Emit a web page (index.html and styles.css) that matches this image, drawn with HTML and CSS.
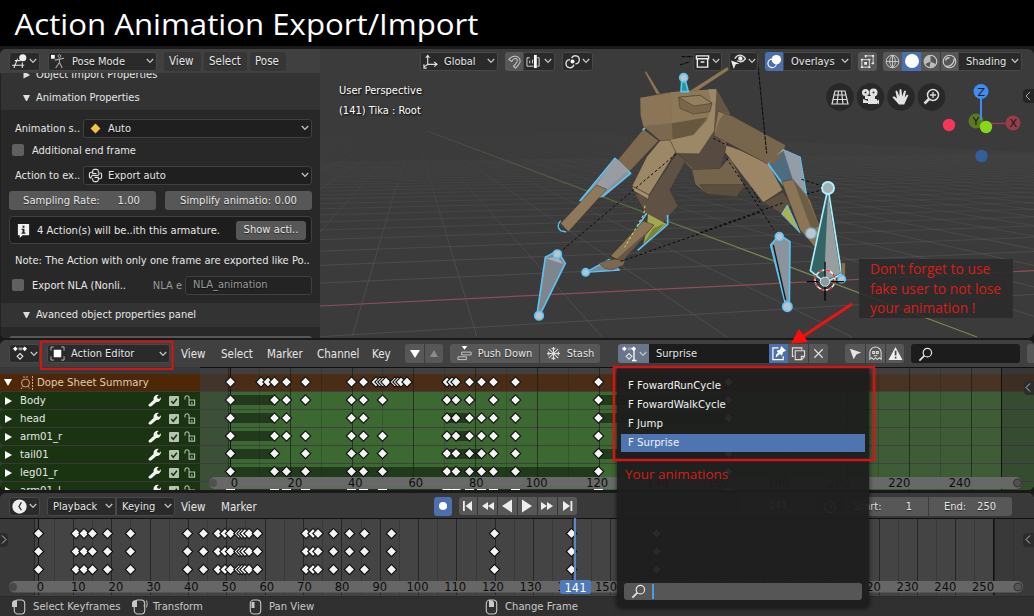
FILE: index.html
```html
<!DOCTYPE html>
<html lang="en">
<head>
<meta charset="utf-8">
<title>Action Animation Export/Import</title>
<link rel="stylesheet" href="styles.css">
</head>
<body>
<svg class="defs" aria-hidden="true">
  <symbol id="chev" viewBox="0 0 8 6"><path d="M.8 1 4 4.4 7.2 1" fill="none" stroke="#c4c4c4" stroke-width="1.3"/></symbol>
  <symbol id="view3d" viewBox="0 0 16 16"><path d="M3 7h6M0 12h13M6 5 2 15M11 9v6" fill="none" stroke="#ddd" stroke-width="1.2"/><circle cx="11.500" cy="4" r="3.8" fill="#eee"/></symbol>
  <symbol id="pose" viewBox="0 0 16 16"><rect x="0" y="1" width="4" height="4" fill="#fff"/><circle cx="9" cy="2.200" r="1.5" fill="none" stroke="#aaa"/><path d="m4 6.500 5-1 5-1M9 5v4l-4 6M9 9l3 6" fill="none" stroke="#aaa" stroke-width="1.2"/></symbol>
  <symbol id="axes" viewBox="0 0 16 16"><path d="M5 12V2M3 4l2-2.500 2 2.500M5 11h10M12 8.500 15 11l-3 2.500M5 11l-4 3M1 11v4h3" fill="none" stroke="#ddd" stroke-width="1.200"/></symbol>
  <symbol id="magnet" viewBox="0 0 16 16"><path d="M2 6c4-6 12-4 12 2 0 2-2 4-5 7l-2-2c3-3 4-4 4-6 0-3-4-3-6 1z" fill="none" stroke="#c5c5c5" stroke-width="1.100"/></symbol>
  <symbol id="snap" viewBox="0 0 16 16"><path d="M1 4v9h7M1 4h3M4 7v3M7 6v4M12 4h2v9h-2" fill="none" stroke="#ddd"/><rect x="8.500" y="1" width="3" height="14" fill="#fff"/></symbol>
  <symbol id="link" viewBox="0 0 16 16"><path d="M9.500 11.500A4.300 4.300 0 1 1 5.500 6M7 4.500A4.300 4.300 0 1 1 11 10.500" fill="none" stroke="#ddd" stroke-width="1.400"/><circle cx="8" cy="8" r="2.100" fill="#fff"/></symbol>
  <symbol id="archive" viewBox="0 0 16 16"><path d="M1.500 2h13v3h-13zM2.500 5v9h11V5M6 8.500h4" fill="none" stroke="#eee" stroke-width="1.500"/></symbol>
  <symbol id="eye" viewBox="0 0 16 16"><path d="M4 5c3-5 8-5 11.500 0-3 4-6 4-9 2" fill="none" stroke="#ddd" stroke-width="1.400"/><circle cx="10" cy="4.800" r="2.300" fill="#eee"/><path d="m0 7 9 3-4 1-2 5z" fill="#eee"/></symbol>
  <symbol id="overlay" viewBox="0 0 16 16"><circle cx="10" cy="6" r="5" fill="#fff"/><circle cx="5.500" cy="10" r="4.500" fill="none" stroke="#fff" stroke-width="1.200"/></symbol>
  <symbol id="xray" viewBox="0 0 16 16"><path d="M2 6h8v8H2zM6 2h8v8h-2M6 2v2" fill="none" stroke="#ddd"/><path d="M1 5h2v2H1zM9 5h2v2H9zM1 13h2v2H1zM9 13h2v2H9zM5 1h2v2H5zM13 1h2v2h-2zM13 9h2v2h-2zM4.500 8.500h3v3h-3z" fill="#eee"/></symbol>
  <symbol id="wire" viewBox="0 0 16 16"><circle cx="8" cy="8" r="6.700" fill="none" stroke="#ccc"/><path d="M1.500 8h13M8 1.500v13M8 1.300c-4 4-4 9 0 13.400M8 1.300c4 4 4 9 0 13.400" fill="none" stroke="#ccc"/></symbol>
  <symbol id="mat" viewBox="0 0 16 16"><circle cx="8" cy="8" r="6.700" fill="none" stroke="#ccc" stroke-width="1.200"/><path d="M8 8V1.500A6.500 6.500 0 0 0 2 11zM8 8l6 3a6.500 6.500 0 0 1-7 3z" fill="#bbb"/></symbol>
  <symbol id="render" viewBox="0 0 16 16"><circle cx="8" cy="8" r="6.700" fill="none" stroke="#ccc" stroke-width="1.200"/><path d="M4 7c0-2 2-3 4-3M4 13c5 1 9-3 9-8" fill="none" stroke="#ccc" stroke-width="1.500"/></symbol>
  <symbol id="python" viewBox="0 0 16 16"><path d="M11 5V3.500a2 2 0 0 0-2-2H7a2 2 0 0 0-2 2V6h4M5 4.500H3.500a2 2 0 0 0-2 2v2.500a2 2 0 0 0 2 2M5 11v1.500a2 2 0 0 0 2 2h2a2 2 0 0 0 2-2V10H7M11 11.500h1.500a2 2 0 0 0 2-2V7a2 2 0 0 0-2-2M3.500 11a2 2 0 0 1 2-3h4a2 2 0 0 0 2-3" fill="none" stroke="#e0e0e0" stroke-width="1.200"/></symbol>
  <symbol id="info" viewBox="0 0 16 16"><path d="M2 1h12v12H7l-3 3v-3H2z" fill="#f0f0f0"/><path d="M7 3h2v2H7zM6 6h3v4h1v1.500H6V10h1V7.500H6z" fill="#222"/></symbol>
  <symbol id="dope" viewBox="0 0 18 16"><path d="M4 .5 6.500 3 4 5.500 1.500 3zM14 .5 16.500 3 14 5.500 11.500 3z" fill="#fff"/><path d="M7.500 1.500h4v3h-4z" fill="#999"/><path d="m9 8 3 3-3 3-3-3z" fill="none" stroke="#ddd" stroke-width="1.300"/></symbol>
  <symbol id="obj" viewBox="0 0 16 16"><path d="M4 1H1v4M12 1h3v4M1 11v4h3M15 11v4h-3" fill="none" stroke="#bbb"/><rect x="4" y="4" width="8" height="8" fill="#fff"/></symbol>
  <symbol id="push" viewBox="0 0 16 16"><path d="M5 0h6L8 4z" fill="#fff"/><path d="M5 6.500h10v3H5zM1 11.500h9v3H1z" fill="none" stroke="#ccc"/></symbol>
  <symbol id="snow" viewBox="0 0 16 16"><path d="M8 1v14M1 8h14M3 3l10 10M13 3 3 13M6 2l2 2 2-2M6 14l2-2 2 2M2 6l2 2-2 2M14 6l-2 2 2 2" fill="none" stroke="#ddd" stroke-width="1.100"/></symbol>
  <symbol id="shield" viewBox="0 0 16 16"><path d="M8 2H2v12.500h11V11" fill="none" stroke="#fff" stroke-width="1.300"/><path d="m11 0 5 5-3 1.500-1.500 4-2-2L5 12.500 5.500 9l2-2L6 5l3.500-1z" fill="#fff"/></symbol>
  <symbol id="dup" viewBox="0 0 16 16"><path d="M3 11H1.500V2h10v2M4.500 5h10v6l-3 3.500h-7zM14 11h-3v3" fill="none" stroke="#ddd" stroke-width="1.200"/></symbol>
  <symbol id="close" viewBox="0 0 16 16"><path d="m3.500 3.500 9 9m0-9-9 9" fill="none" stroke="#ddd" stroke-width="1.300"/></symbol>
  <symbol id="cursor" viewBox="0 0 16 16"><path d="M2 3l12 4-5 2-3 5z" fill="#e5e5e5"/></symbol>
  <symbol id="ghost" viewBox="0 0 16 16"><path d="M2 14V7a6 6 0 0 1 12 0v7l-2-1.500-2 2-2-2-2 2-2-2zM5 6h2v2H5zM9 6h2v2H9zM6 10.500h4" fill="none" stroke="#ddd" stroke-width="1.100"/></symbol>
  <symbol id="warn" viewBox="0 0 16 16"><path d="M8 1l7.500 14H.5z" fill="#eee"/><path d="M7.200 5h1.800v5H7.200zM7.200 11.500h1.800v1.800H7.200z" fill="#444"/></symbol>
  <symbol id="search" viewBox="0 0 16 16"><circle cx="10" cy="6" r="4.500" fill="none" stroke="#e5e5e5" stroke-width="1.300"/><path d="M6.800 9.200 1.500 14.500" stroke="#e5e5e5" stroke-width="1.800"/></symbol>
  <symbol id="wrench" viewBox="0 0 14 14"><path d="M1 11 6 6.500C5.500 3 8 .5 11.500 1L9.500 3.200l.7 1.500 1.800.6L14 3.500c.2 3-2 5.500-5 5L4 13C2 14.500-.5 12.800 1 11z" fill="#f2f2f2"/></symbol>
  <symbol id="check" viewBox="0 0 11 11"><rect width="11" height="11" rx="1" fill="#b4c4ae"/><path d="m2.500 5.500 2.200 2.500 4-5" fill="none" stroke="#173010" stroke-width="1.600"/></symbol>
  <symbol id="lock" viewBox="0 0 13 12"><path d="M5.500 5.500h6v5.500h-6zM5.500 5V3a2 2 0 0 0-4.500 0v2M8.500 7.500v2" fill="none" stroke="#b0bfab" stroke-width="1.200"/></symbol>
  <symbol id="clock" viewBox="0 0 16 16"><circle cx="8" cy="8" r="7.600" fill="#eee"/><path d="M10 3.500 7.500 8l2.500 4" fill="none" stroke="#333" stroke-width="1.500"/></symbol>
  <symbol id="stopwatch" viewBox="0 0 16 16"><circle cx="7.500" cy="9" r="5.700" fill="none" stroke="#ccc" stroke-width="1.200"/><path d="M6 1.500h3M13 3l1.500 1.500M7.500 9h3M7.500 9l3-4" fill="none" stroke="#ccc"/></symbol>
  <symbol id="mouse" viewBox="0 0 12 16"><rect x=".8" y="1" width="10.400" height="14" rx="3.500" fill="none" stroke="#c8c8c8" stroke-width="1.100"/></symbol>
</svg>

<main class="page">
  <h1 class="title"><svg width="500" height="46"><text x="14.500" y="35" textLength="464" lengthAdjust="spacingAndGlyphs">Action Animation Export/Import</text></svg></h1>

  <section class="area view">
    <svg class="scene" viewBox="0 49 1034 289">
      <defs>
        <linearGradient id="fade" gradientUnits="userSpaceOnUse" x1="0" y1="130" x2="0" y2="270"><stop offset="0" stop-color="#555" stop-opacity="0"/><stop offset="1" stop-color="#585858" stop-opacity=".6"/></linearGradient>
        <linearGradient id="greenfade" gradientUnits="userSpaceOnUse" x1="427" y1="0" x2="760" y2="0"><stop offset="0" stop-color="#5c6844" stop-opacity=".3"/><stop offset="1" stop-color="#73874b"/></linearGradient>
      </defs>
      <g id="grid" fill="none" stroke="url(#fade)"></g>
      <path d="M320 306 1034 270.700" stroke="#8e4d57" stroke-width="1.200"/>
      <path d="M427 131 977 337" stroke="url(#greenfade)" stroke-width="1.300"/>

      <g transform="translate(500 60) scale(.33333)" stroke="#3c3329" stroke-width="1.500" stroke-linejoin="round">
        <g fill="#8b7658"><path d="m432 33 8 2 42 68-12 1z"/><path d="m682 20 5 10-115 76-10-9z"/></g>
        <path d="M575 328 660 325 690 290 735 378 710 410 620 402 585 372z" fill="#75644c"/>
        <path d="M600 374 735 374 710 410 620 402z" fill="#5d4f40"/>
        <path d="M421 113 500 97 647 88 690 160 678 262 660 325 575 328 530 282 480 242 430 200 422 165z" fill="#7b684f"/>
        <path d="M421 113 512 100 516 190 430 198 422 165z" fill="#8b7556" stroke="none"/>
        <path d="M512 97 560 92 648 88 622 178 516 190z" fill="#8d7858" stroke="none"/>
        <path d="M516 190 622 172 580 225 518 242z" fill="#66573f" stroke="none"/>
        <path d="M625 88 650 88 643 210 597 280 530 278 510 240 580 225 622 180 635 130z" fill="#9c8767" stroke="none"/>
        <path d="M650 88 690 160 657 155 641 222z" fill="#655543" stroke="none"/>
        <path d="M530 280 597 281 643 212 678 262 660 325 580 328z" fill="#574a41" stroke="none"/>
        <path d="M536 112 600 106 636 130 630 155 580 162 540 145z" fill="#7a674b"/>
        <path d="M536 112 600 106 636 130 582 138z" fill="#948060"/>
        <path d="M430 207 476 242 388 335 353 300z" fill="#7c694f"/>
        <path d="M345 295 392 340 310 408 240 422z" fill="#8b9199" stroke="#5cc4f5" stroke-width="5"/>
        <path d="M355 300 385 330 320 388 290 375 340 300z" fill="#999da3" stroke="none"/>
        <path d="M290 375 320 388 205 515 182 490z" fill="#8e795b"/>
        <path d="M182 482q-15 18 0 30l16 4" fill="none" stroke="#5cc4f5" stroke-width="4"/>
        <path d="M530 280 558 300 510 390 534 438 490 487 440 465 403 400 447 405z" fill="#5f5143"/>
        <path d="M480 242 510 240 527 276 447 405 396 378 440 290z" fill="#9c8767"/>
        <path d="M396 378 447 405 445 418 400 392z" fill="#a58f6c"/>
        <path d="m440 460-28 42M503 465v28l-90 78" fill="none" stroke="#5cc4f5" stroke-width="5"/>
        <path d="M444 462 500 492 430 552 440 510z" fill="#a3a84c" stroke="none"/>
        <path d="M495 490 455 532 432 548 460 505z" fill="#77843a" stroke="none"/>
        <path d="M257 637 328 598 358 630z" fill="#748a9c" stroke="#5cc4f5" stroke-width="4"/>
        <path d="M430 483 462 495 365 605 332 588z" fill="#8b7556"/><path d="M448 510 463 496 366 605 350 597z" fill="#655543" stroke="none"/>
        <path d="M295 608 345 597 375 603 370 616 335 630 315 625z" fill="#7b684f"/>
        <path d="M136 592 172 572 196 610 124 756H112z" fill="#7e868d" stroke="#5cc4f5" stroke-width="5"/>
        <path d="M136 595 172 590 190 612" fill="#a6afb7" stroke="none"/>
        <g fill="#b9c4cc" stroke="#5cc4f5" stroke-width="5"><circle cx="257" cy="637" r="11"/><circle cx="172" cy="582" r="12"/><circle cx="117" cy="767" r="13"/><path d="M545 65h12l8 30h-22z" fill="#249a94"/><circle cx="551" cy="53" r="12"/></g>
        <path d="M695 170l40 24M428 210l7-6" stroke="#5cc4f5" stroke-width="5"/>
        <g fill="none" stroke="#080808" stroke-width="3" stroke-dasharray="8 7"><path d="M528 282 190 568"/><path d="M640 235l45 22 95 170"/><path d="M780 457 360 605"/></g>
        <path d="M435 437 432 462 374 562" fill="none" stroke="#e4df58" stroke-width="3" stroke-dasharray="8 7"/>
      </g>
      <g transform="translate(640 45) scale(.33333)" stroke="#3c3329" stroke-width="1.500" stroke-linejoin="round">
        <path d="M258 300 300 315 385 355 428 435 370 473 310 395 255 322z" fill="#9b8565"/>
        <path d="M235 200 275 212 437 300 425 345 385 358 222 272z" fill="#77654c"/>
        <path d="M235 200 252 206 238 225 222 272z" fill="#8f7a5b" stroke="none"/>
        <path d="M125 35h35M120 60l30-10M350 20 380 325" fill="none" stroke="#080808" stroke-width="3" stroke-dasharray="12 3"/>
      </g>
      <g transform="translate(700 130) scale(.33333)" stroke="#3c3329" stroke-width="1.500" stroke-linejoin="round">
        <path d="M190 218 248 185 275 225 250 254z" fill="#5c4f42"/>
        <path d="M245 252 262 225 300 308z" fill="#abb34e" stroke="#5cc4f5" stroke-width="3"/>
        <path d="M205 102 250 60 300 82 322 212 250 165z" fill="#4e6c80" stroke="#5cc4f5" stroke-width="5"/>
        <path d="M205 102 220 82 250 62 254 68 224 100z" fill="#77654c" stroke="none"/>
        <path d="M250 60 300 82 320 210 278 148z" fill="#949da6" stroke="none"/>
        <path d="M245 155 278 148 330 210 360 290 345 352 300 300z" fill="#8b7556"/>
        <path d="M280 150 322 205 358 288 335 300z" fill="#6d5c46" stroke="none"/>
        <circle cx="333" cy="310" r="16" fill="#bdc7ce" stroke="#74aed1" stroke-width="4"/>
        <path d="M212 345 238 314 270 335 268 520H256z" fill="#8b949c" stroke="#5cc4f5" stroke-width="5"/><path d="M220 345 257 510" stroke="#101820" stroke-width="4"/>
        <path d="M380 193 387 193 425 432 375 458 331 422z" fill="#326563" stroke="#a8f0ff" stroke-width="5"/>
        <path d="M384 195 421 430 372 453z" fill="#989e9f" stroke="none"/>
        <path d="M424 398h12v35l-10 12z" fill="#887354"/>
        <g fill="#b9c4cc" stroke="#5cc4f5" stroke-width="5"><circle cx="238" cy="320" r="12"/><circle cx="262" cy="530" r="14"/><circle cx="425" cy="447" r="11"/></g>
        <circle cx="384" cy="174" r="18" fill="#a4afaf" stroke="#a8f0ff" stroke-width="6"/>
        <circle cx="375" cy="455" r="14" fill="#8e9999" stroke="#bdecf5" stroke-width="3"/>
        <circle cx="375" cy="450" r="30" fill="none" stroke="#f5f5f5" stroke-width="4"/><circle cx="375" cy="450" r="30" fill="none" stroke="#e02525" stroke-width="4" stroke-dasharray="12 12"/>
        <path d="M320 455h36M394 455h38M375 395v45M375 470v42" stroke="#050505" stroke-width="4"/>
        <g fill="none" stroke="#080808" stroke-width="3" stroke-dasharray="8 7"><path d="M80 85 180 235 222 300M0 308 250 218M305 148 366 168M320 192l45-12"/></g>
      </g>
      <g class="gizmo">
        <path d="M981 92v29" stroke="#3d8cf0" stroke-width="2"/><path d="M990 123.500h20" stroke="#963e4c" stroke-width="1.500"/>
        <circle cx="981" cy="91.500" r="7.500" fill="#3e8ef2"/><circle cx="976" cy="121" r="7.500" fill="#5b7a1d"/><circle cx="1013" cy="123" r="7.500" fill="#973c49"/>
        <circle cx="949" cy="125" r="6.200" fill="#f7365a"/><circle cx="981.500" cy="156" r="6.200" fill="#315f9c"/>
        <text x="977.500" y="95.500">Z</text><text x="972.500" y="125">Y</text><text x="1009.500" y="127">X</text>
        <path d="M981 100v20" stroke="#3d8cf0" stroke-width="2"/><circle cx="986" cy="127" r="6.200" fill="#88d61a"/>
      </g>
      <g class="nav">
        <circle class="disc" cx="840" cy="97" r="13.800"/><circle class="disc" cx="870.500" cy="97" r="13.800"/><circle class="disc" cx="901" cy="97" r="13.800"/><circle class="disc" cx="931.500" cy="97" r="13.800"/>
        <path d="M835 91h10l3 13h-16zM834 95h12M833 99.500h14M838.500 91l-1.500 13M841.500 91l1.500 13" fill="none" stroke="#ddd" stroke-width="1.200"/>
        <g fill="#e2e2e2"><circle cx="865.500" cy="92.500" r="3.500"/><circle cx="873.500" cy="92.500" r="4"/><path d="M865 96h10v3h-10zM868 99h9v5h-9zM877 101l2-1.500v5l-2-1.500zM863 99l5 2v2h-5z"/></g><circle cx="873.500" cy="92.500" r="1" fill="#333"/><circle cx="865.500" cy="92.500" r="1" fill="#333"/>
        <path d="M899 104.500 894 99q-3-3 .5-2.500l2.500 2-1.500-7q.5-2 2 0l1.800 5 .2-6.500q1.200-1.800 2 0l.6 6.500 2-5.500q1.500-1.200 1.800.5l-1.200 6 2-2.500q1.800-.8 1.500.7l-4 8.800z" fill="#e2e2e2"/>
        <circle cx="933" cy="95" r="5.500" fill="none" stroke="#ddd" stroke-width="1.500"/><path d="M930 95h6M933 92v6" stroke="#ddd" stroke-width="1.300"/><path d="m929 99-4.500 4.500" stroke="#ddd" stroke-width="2.600"/>
      </g>
      <rect x="1023" y="89" width="16" height="14" rx="4" fill="#242424"/><path d="m1030 92-4 4 4 4" fill="none" stroke="#aaa"/>
    </svg>
    <header class="bar top">
      <div class="btn dark c30 m10"><svg class="i16"><use href="#view3d"/></svg><svg class="chev"><use href="#chev"/></svg></div>
      <div class="btn dark select w109 m8"><svg class="i16"><use href="#pose"/></svg><span class="grow">Pose Mode</span><svg class="chev"><use href="#chev"/></svg></div>
      <div class="btn menu w37 m7">View</div><div class="btn menu w44 m3">Select</div><div class="btn menu w36 m3">Pose</div>
      <div class="btn dark select w78 m134"><svg class="i16"><use href="#axes"/></svg><span class="grow">Global</span><svg class="chev"><use href="#chev"/></svg></div>
      <div class="group m7"><div class="btn lit w18"><svg class="i16"><use href="#magnet"/></svg></div><div class="btn dark w32"><svg class="i16"><use href="#snap"/></svg><svg class="chev"><use href="#chev"/></svg></div></div>
      <div class="btn dark c30 m7"><svg class="i16"><use href="#link"/></svg><svg class="chev"><use href="#chev"/></svg></div>
      <div class="btn dark c29 m101"><svg class="i16"><use href="#archive"/></svg><svg class="chev"><use href="#chev"/></svg></div>
      <div class="btn dark c29 m7"><svg class="i16"><use href="#eye"/></svg><svg class="chev"><use href="#chev"/></svg></div>
      <div class="group m7"><div class="btn blue w18"><svg class="i16"><use href="#overlay"/></svg></div><div class="btn dark select w69 pl8"><span class="grow">Overlays</span><svg class="chev"><use href="#chev"/></svg></div></div>
      <div class="btn lit w19 m6"><svg class="i16"><use href="#xray"/></svg></div>
      <div class="group m6"><div class="btn lit w19"><svg class="i16"><use href="#wire"/></svg></div><div class="btn blue w19"><i class="ball"></i></div><div class="btn lit w19"><svg class="i16"><use href="#mat"/></svg></div><div class="btn lit w18"><svg class="i16"><use href="#render"/></svg></div><div class="btn dark select w64 pl8"><span class="grow">Shading</span><svg class="chev"><use href="#chev"/></svg></div></div>
    </header>
    <aside class="props">
      <div class="phead cut"><i class="tri right"></i>Object Import Properties</div>
      <div class="phead"><i class="tri"></i>Animation Properties</div>
      <div class="pbody">
        <div class="row r1"><label>Animation s..</label><div class="btn field"><i class="gold"></i><span class="grow">Auto</span><svg class="chev"><use href="#chev"/></svg></div></div>
        <div class="row r2"><i class="box"></i><span>Additional end frame</span></div>
        <div class="row r3"><label>Action to ex..</label><div class="btn field"><svg class="i16"><use href="#python"/></svg><span class="grow">Export auto</span><svg class="chev"><use href="#chev"/></svg></div></div>
        <div class="row r4"><div class="btn num"><span>Sampling Rate:</span><span>1.00</span></div><div class="btn num tight"><span>Simplify animatio:</span><span>0.00</span></div></div>
        <div class="row note"><svg class="i16"><use href="#info"/></svg><span class="grow">4 Action(s) will be..ith this armature.</span><div class="btn show">Show acti..</div></div>
        <div class="row r6"><span>Note: The Action with only one frame are exported like Po..</span></div>
        <div class="row r7"><i class="box"></i><span class="grow">Export NLA (Nonli..</span><span class="off">NLA e</span><div class="btn nla">NLA_animation</div></div>
      </div>
      <div class="phead second"><i class="tri"></i>Avanced object properties panel</div>
      <div class="stub"></div>
    </aside>
    <div class="stats"><span>User Perspective</span><span>(141) Tika : Root</span></div>
    <div class="tip">Don't forget to use<br>fake user to not lose<br>your animation !</div>
  </section>

  <section class="area sheet">
    <header class="bar">
      <div class="btn dark c30 m9"><svg class="i18"><use href="#dope"/></svg><svg class="chev"><use href="#chev"/></svg></div>
      <div class="btn dark select w123 m7"><svg class="i16"><use href="#obj"/></svg><span class="grow">Action Editor</span><svg class="chev"><use href="#chev"/></svg></div>
      <nav class="menus"><span class="t1">View</span><span class="t2">Select</span><span class="t3">Marker</span><span class="t4">Channel</span><span class="t5">Key</span></nav>
      <div class="group"><div class="btn lit w19"><i class="down"></i></div><div class="btn lit w19"><i class="up"></i></div></div>
      <div class="group m7"><div class="btn lit w89"><svg class="i16"><use href="#push"/></svg><span>Push Down</span></div><div class="btn lit w61"><svg class="i16"><use href="#snow"/></svg><span>Stash</span></div></div>
      <div class="group m18"><div class="btn steel w31"><svg class="i18"><use href="#dope"/></svg><svg class="chev"><use href="#chev"/></svg></div><div class="btn black w120">Surprise</div><div class="btn blue w19"><svg class="i16"><use href="#shield"/></svg></div><div class="btn lit w20"><svg class="i16"><use href="#dup"/></svg></div><div class="btn lit w20"><svg class="i16"><use href="#close"/></svg></div></div>
      <div class="group m17"><div class="btn lit w20"><svg class="i16"><use href="#cursor"/></svg></div><div class="btn lit w20"><svg class="i16"><use href="#ghost"/></svg></div><div class="btn lit w19"><svg class="i16"><use href="#warn"/></svg></div></div>
      <div class="btn black w109 m7"><svg class="i16"><use href="#search"/></svg></div>
      <div class="btn lit w12 m7"></div>
    </header>
    <div class="split">
      <div class="channels" id="channels"></div>
      <svg class="keys" id="dopeKeys" viewBox="200 367 834 123"></svg>
    </div>
  </section>

  <section class="area time">
    <header class="bar">
      <div class="btn dark c30 m9"><svg class="i16"><use href="#clock"/></svg><svg class="chev"><use href="#chev"/></svg></div>
      <div class="group m7"><div class="btn dark select w69 pl6"><span class="grow">Playback</span><svg class="chev"><use href="#chev"/></svg></div><div class="btn dark select w59 pl6"><span class="grow">Keying</span><svg class="chev"><use href="#chev"/></svg></div></div>
      <nav class="menus short"><span class="t1">View</span><span class="t2">Marker</span></nav>
      <div class="btn blue w18"><i class="dot"></i></div>
      <svg class="transport" viewBox="0 0 118 18"><rect width="118" height="18" rx="3" fill="#575757"/><path d="M18.500 0v18M38.500 0v18M58.500 0v18M78.500 0v18M98.500 0v18" stroke="#353535"/><path d="M4 4h1.800v10H4zM13 4v10L6.500 9zM29 5v8l-6-4zM35 5v8l-6-4zM53 2.500v13L43 9zM63 2.500v13L73 9zM82 5v8l6-4zM88 5v8l6-4zM104 4v10l7-5zM111.500 4h1.800v10h-1.800z" fill="#eee"/></svg>
      <div class="btn lit frame">141</div><svg class="i16 sw"><use href="#stopwatch"/></svg>
      <div class="group m6"><div class="btn lit range s"><span>Start:</span><span>1</span></div><div class="btn lit range e"><span>End:</span><span>250</span></div></div>
    </header>
    <svg class="keys" id="timeKeys" viewBox="0 518 1034 78"></svg>
  </section>

  <footer class="status">
    <span class="s1"><svg class="mouse"><use href="#mouse"/><path d="M1 8V4q0-3 5-3v7z"/></svg>Select Keyframes</span>
    <span class="s2"><svg class="mouse"><use href="#mouse"/><path d="M1 8V4q0-3 5-3v7z"/><path class="wave" d="M13 2.500q1 2 0 5M15.500 1.500q1.500 3 0 7"/></svg>Transform</span>
    <span class="s3"><svg class="mouse"><use href="#mouse"/><path d="M4.500 3h3v6h-3z"/></svg>Pan View</span>
    <span class="s4"><svg class="mouse"><use href="#mouse"/><path d="M6 1q5 0 5 3v4H6z"/></svg>Change Frame</span>
  </footer>

  <div class="popup">
    <ul><li>F FowardRunCycle</li><li>F FowardWalkCycle</li><li>F Jump</li><li class="on">F Surprise</li></ul>
    <p>Your animations</p>
    <div class="find"><svg class="i16"><use href="#search"/></svg><i></i></div>
  </div>
  <svg class="marks" viewBox="0 0 1034 616">
    <g fill="none" stroke="#d61414" stroke-width="2"><rect x="41" y="341.500" width="131.500" height="27.500"/><rect x="614" y="367" width="260" height="93" stroke-width="2.500"/></g>
    <path d="M852 304 802 337" stroke="#f01212" stroke-width="3"/><path d="M791 343.500 799 329 808 342z" fill="#ff0c0c"/>
    <path d="M631.500 348.500h2m2 0h-1.500v12h-2m2 0h2.500" stroke="#fff" stroke-width="1.300" fill="none"/>
  </svg>
</main>
<script src="app.js"></script>
</body>
</html>
```

FILE: styles.css
```css
* { box-sizing: border-box; }
body { margin: 0; background: #191919; }
.defs { position: absolute; width: 0; height: 0; }
.page { position: relative; width: 1034px; height: 616px; overflow: hidden; display: flex; flex-direction: column; font: 11px "DejaVu Sans Condensed", "DejaVu Sans", sans-serif; font-stretch: condensed; color: #e6e6e6; line-height: 14px; white-space: nowrap; }
.title { margin: 0 0 3px; height: 46px; background: #000; font: 400 33px "Open Sans", sans-serif; }
.title svg { display: block; }
.title text { fill: #fff; font-size: 30px; }
.area { position: relative; flex: none; overflow: hidden; border-radius: 6px; }
.view { height: 288.500px; margin-bottom: 2.500px; background: #3b3b3b; }
.sheet { height: 150px; margin-bottom: 3px; background: #3d3d3d; }
.time { height: 103px; background: #3d3d3d; border-radius: 6px 6px 0 0; }
.scene { position: absolute; left: 0; top: 0; width: 1034px; height: 289px; }
.bar { display: flex; align-items: center; height: 27px; background: #404040; }
.bar.top { position: relative; height: 24px; background: linear-gradient(90deg, #404040 320px, transparent 320px); }
.time .bar { height: 25px; background: #393939; padding-top: 1px; }
.btn { display: flex; align-items: center; flex: none; height: 19px; border-radius: 3px; text-shadow: 0 1px 1px #0008; }
.btn span, .row > span, .row label { padding-top: 1px; }
.dark { background: #2a2a2a; box-shadow: inset 0 0 0 1px #484848; }
.lit { background: #575757; justify-content: center; }
.blue { background: #4b70ad; justify-content: center; }
.steel { background: #68758a; padding-left: 2px; gap: 1px; }
.black { background: #1c1c1c; padding: 1px 0 0 7px; }
.menu { background: #363636; padding-left: 5px; font-size: 11.500px; }
.select { padding: 0 3px 0 3px; }
.select .i16 + span { margin-left: 6px; }
.grow { flex: 1; }
.i16 { width: 15px; height: 15px; flex: none; }
.i18 { width: 18px; height: 15px; flex: none; }
.chev { width: 8px; height: 6px; flex: none; }
.group { display: flex; flex: none; }
.group .btn { border-radius: 0; }
.group .lit + .lit { border-left: 1px solid #3c3c3c; }
.group > :first-child { border-radius: 3px 0 0 3px; }
.group > :last-child { border-radius: 0 3px 3px 0; }
.c30 { width: 31px; justify-content: space-evenly; }
.c29 { width: 29px; justify-content: space-evenly; }
.w12 { width: 12px; } .w18 { width: 18px; } .w19 { width: 19px; } .w20 { width: 20px; }
.w31 { width: 31px; } .w32 { width: 32px; justify-content: space-evenly; }
.w36 { width: 36px; } .w37 { width: 37px; } .w44 { width: 43px; } .w59 { width: 59px; }
.w61 { width: 61px; gap: 6px; } .w64 { width: 64px; } .w69 { width: 69px; } .w78 { width: 78px; }
.w89 { width: 89px; gap: 6px; } .w109 { width: 109px; } .w120 { width: 120px; } .w123 { width: 123px; }
.pl8.select { padding-left: 8px; } .pl6.select { padding-left: 6px; }
.m3 { margin-left: 3px; } .m6 { margin-left: 6px; } .m7 { margin-left: 7px; } .m8 { margin-left: 8px; }
.m9 { margin-left: 9px; } .m10 { margin-left: 9px; } .m17 { margin-left: 17px; } .m18 { margin-left: 18px; }
.m101 { margin-left: 100px; } .m134 { margin-left: 134px; }
.ball { width: 14px; height: 14px; border-radius: 50%; background: #fff; }
.dot { width: 8px; height: 8px; border-radius: 50%; background: #fff; }
.down { border: 5px solid transparent; border-top: 8px solid #fff; border-bottom: 0; }
.up { border: 4px solid transparent; border-bottom: 7px solid #8c8c8c; border-top: 0; }

.props { position: relative; width: 320px; height: 265px; background: #282828; overflow: hidden; border-left: 1px solid #222; }
.phead { display: flex; align-items: center; height: 25px; padding: 1px 0 0 22px; gap: 6px; background: #333; }
.phead.cut { height: 12px; padding: 0 0 8px 22px; overflow: hidden; }
.tri { width: 7px; border: 3.500px solid transparent; border-top: 6px solid #ddd; border-bottom: 0; }
.tri.right { transform: rotate(-90deg); }
.pbody { height: 192.500px; padding: 0 8px 0 8px; display: flex; flex-direction: column; }
.row { display: flex; align-items: center; flex: none; height: 20px; }
.row label { width: 68px; padding-left: 6px; margin-right: 6px; }
.r1 { margin-top: 8px; }
.r2 { margin-top: 2px; }
.r3 { margin-top: 5px; }
.r4 { margin-top: 5px; gap: 9px; }
.field { flex: 1; background: #1f1f1f; border: 1px solid #404040; padding: 0 2px 0 4px; gap: 5px; }
.gold { width: 7px; height: 7px; background: #f5bf4b; transform: rotate(45deg); margin: 0 4px; }
.box { width: 12px; height: 12px; background: #606060; border-radius: 2px; margin: 0 8px 0 3px; }
.num { width: 147px; background: #575757; justify-content: space-between; padding: 0 16px 0 14px; font-size: 11.200px; }
.num.tight { padding: 0 15px; }
.note { height: 28px; margin-top: 6px; background: #1d1d1d; border: 1px solid #404040; border-radius: 4px; padding: 0 5px 0 6px; gap: 6px; width: 303px; font-size: 11.150px; }
.show { width: 70px; background: #575757; justify-content: center; }
.r6 { margin-top: 6px; padding-left: 6px; font-size: 11.100px; }
.r7 { margin-top: 5px; width: 303px; }
.off { color: #999; margin-right: 3px; }
.nla { width: 127px; border: 1px solid #404040; color: #9b9b9b; padding-left: 7px; background: #232323; }
.second { height: 24px; }
.stub { height: 4px; margin: 9px 8px 0; background: #575757; border-radius: 3px 3px 0 0; }
.stats { position: absolute; left: 339px; top: 32px; display: flex; flex-direction: column; line-height: 20px; color: #fff; text-shadow: 1px 1px 2px #000; }
.tip { position: absolute; left: 859px; top: 210px; width: 154px; height: 59px; padding-left: 11px; background: #2a2a2ae0; color: #d81d18; font: 13.800px/19.500px "Open Sans", sans-serif; }
.gizmo text { font: 11px "DejaVu Sans", sans-serif; fill: #101522; }
.nav .disc { fill: #282828; }

.menus { position: relative; display: flex; width: 235px; flex: none; padding-left: 11px; font-size: 11.500px; padding-top: 1px; }
.t1 { width: 40px; } .t2 { width: 46px; } .t3 { width: 50px; } .t4 { width: 55px; }
.menus.short { width: 259px; padding-left: 6px; }
.split { display: flex; height: 123px; }
.channels { width: 200px; height: 123px; padding-top: 7px; overflow: hidden; background: #383838; }
.ch { display: flex; align-items: center; height: 17px; margin-bottom: 1px; background: #1a3311; padding-left: 5px; font-size: 11.300px; border-radius: 4px 0 0 4px; }
.ch.sum { background: #4e2706; color: #dccbbb; padding-left: 4px; border-radius: 0; }
.arrow { border: 4.500px solid transparent; border-left: 7px solid #fff; border-right: 0; margin-right: 8px; }
.sum .arrow { border: 4px solid transparent; border-top: 7px solid #fff; border-bottom: 0; margin-right: 8px; }
.ch svg { flex: none; }
.ch .wr { width: 13px; height: 13px; margin-right: 8px; }
.ch .ck { width: 10px; height: 10px; margin-right: 5px; }
.ch .lk { width: 12px; height: 11px; margin-right: 4px; }
.ch .sm { width: 14px; height: 16px; margin-right: 3px; }
.keys { display: block; flex: none; }
#dopeKeys { width: 834px; height: 123px; }
#timeKeys { width: 1034px; height: 78px; }
.keys text { font: 11.500px "DejaVu Sans", sans-serif; fill: #0c0c0c; text-anchor: middle; }
.keys text.now { fill: #fff; }
.transport { width: 118px; height: 18px; margin-left: 7px; flex: none; }
.frame { width: 76px; margin-left: 163px; }
.sw { margin-left: 7px; }
.range { justify-content: space-between; }
.range.s { width: 84px; padding: 0 16px 0 10px; }
.range.e { width: 84px; padding: 0 16px 0 15px; }

.status { display: flex; flex: 1; align-items: center; background: #303030; border-top: 1px solid #2a2a2a; color: #c8c8c8; font-size: 11.200px; }
.status span { display: flex; align-items: center; flex: none; }
.mouse { width: 17px; height: 16px; margin-right: 5px; }
.mouse path { fill: #c8c8c8; }
.mouse .wave { fill: none; stroke: #bbb; }
.mouse use { width: 12px; height: 16px; }
.s1 { width: 120px; margin-left: 11px; } .s2 { width: 116px; } .s3 { width: 236px; }

.popup { position: absolute; left: 617px; top: 367px; width: 252px; height: 240px; padding: 9px 4px 0; background: #1e1e1ef2; box-shadow: 0 1px 5px #000a; color: #f2f2f2; border-radius: 0 0 4px 4px; }
.popup ul { margin: 0; padding: 0; list-style: none; }
.popup li { height: 19px; line-height: 20px; padding-left: 7px; font-size: 11.300px; }
.popup li.on { background: #4e75b2; height: 18px; margin-top: 1px; line-height: 17px; }
.popup p { margin: 12px 0 0 4px; color: #d41d18; font: 13.500px/20px "Open Sans", sans-serif; }
.find { position: absolute; left: 7px; top: 216px; width: 238px; height: 17px; display: flex; align-items: center; padding-left: 7px; gap: 6px; background: #565656; border-radius: 3px; }
.find i { width: 2px; height: 15px; background: #4a9ee0; }
.marks { position: absolute; left: 0; top: 0; width: 1034px; height: 616px; pointer-events: none; }
```

FILE: app.js
```js
const NS = 'http://www.w3.org/2000/svg';
function add(parent, tag, attrs, text) {
  const el = document.createElementNS(NS, tag);
  for (const k in attrs) el.setAttribute(k, attrs[k]);
  if (text !== undefined) el.textContent = text;
  parent.appendChild(el);
  return el;
}
function diamond(svg, x, y) {
  add(svg, 'path', { d: `M${x} ${y - 5.2}l5.200 5.200-5.200 5.200-5.200-5.200z`, fill: '#f4f4f4', stroke: '#101010', 'stroke-width': 1.1 });
}

// Ground grid of the 3D viewport
const grid = document.getElementById('grid');
for (let k = -1; k < 28; k++) {
  if (k === 0) continue;
  const d = 1 / (0.005525 + k * 0.0008);
  add(grid, 'path', { d: `M320 ${125 + d}L1034 ${125 + d * 0.8}` });
}
for (let x = -2500; x < 5500; x += 125) {
  if (x === 1000) continue;
  add(grid, 'path', { d: `M414 126L${x - 23} 337` });
}

// Channel list
const channels = document.getElementById('channels');
const names = ['Dope Sheet Summary', 'Body', 'head', 'arm01_r', 'tail01', 'leg01_r', 'arm01_l'];
channels.innerHTML = names.map((n, i) => i === 0
  ? `<div class="ch sum"><i class="arrow"></i><svg class="sm" viewBox="0 0 14 16"><circle cx="5.500" cy="8" r="4" fill="none" stroke="#c9a98c"/><path d="M1 14l2-3M8 11l2 3M12.500 1v14M3 2h5" stroke="#c9a98c" stroke-dasharray="2 1" fill="none"/></svg><span>${n}</span></div>`
  : `<div class="ch"><i class="arrow"></i><span class="grow">${n}</span><svg class="wr"><use href="#wrench"/></svg><svg class="ck"><use href="#check"/></svg><svg class="lk"><use href="#lock"/></svg></div>`).join('');

// Dope sheet
const ds = document.getElementById('dopeKeys');
add(ds, 'rect', { x: 200, y: 367, width: 834, height: 123, fill: '#404040' });
for (let r = 0; r < 7; r++) {
  add(ds, 'rect', { x: 200, y: 374 + r * 18, width: 834, height: 17, fill: r ? '#3c6832' : '#4a2c17' });
}
const holds = [[1, 230, 274], [2, 230, 274], [3, 230, 274], [4, 230, 274], [5, 230, 598], [6, 230, 598],
  [2, 447, 469], [3, 456, 469], [4, 447, 482], [1, 598, 728], [2, 598, 728], [4, 598, 728]];
for (const [r, a, b] of holds) add(ds, 'rect', { x: a, y: 377 + r * 18, width: b - a, height: 10, fill: '#213a1c' });
add(ds, 'rect', { x: 860, y: 374, width: 174, height: 116, fill: '#444', opacity: 0.3 });
add(ds, 'rect', { x: 200, y: 367, width: 28, height: 123, fill: '#3c3c3c', opacity: 0.55 });
add(ds, 'rect', { x: 1002, y: 367, width: 32, height: 123, fill: '#252525', opacity: 0.3 });
for (let f = 0; f <= 250; f += 10) {
  const x = Math.round(227.7 + 3.095 * f) + 0.5;
  add(ds, 'path', { d: `M${x} 367V490`, stroke: '#151d13', opacity: f % 20 ? 0.22 : 0.65 });
}
add(ds, 'path', { d: 'M230.500 367V490M1001.500 367V490M200 367.500H1034', stroke: '#111' });
add(ds, 'rect', { x: 209, y: 477, width: 813, height: 12, rx: 6, fill: '#6b6b6b', opacity: 0.93 });
add(ds, 'circle', { cx: 213, cy: 483, r: 4, fill: '#505050' });
add(ds, 'circle', { cx: 1017.5, cy: 483, r: 4, fill: '#505050', stroke: '#333' });
for (let f = 0; f <= 240; f += 20) add(ds, 'text', { x: 234.5 + 3.022 * f, y: 487 }, f);
const all = [230.5, 274.5, 286.5, 305.5, 351.5, 363.5, 382.5, 447, 456, 469.5, 481.5, 493.5, 515.5, 598.5, 728.5];
const rows = [
  [230.5, 261, 268, 274.5, 286.5, 305.5, 351.5, 363.5, 376, 380, 383, 386, 395, 398, 401, 407, 447, 452, 456, 469.5, 481.5, 493.5, 515.5, 598.5, 728.5],
  all.filter(x => x !== 481.5),
  all.filter(x => x !== 305.5 && x !== 382.5),
  all.filter(x => x !== 728.5),
  all.filter(x => x !== 286.5),
  all
];
rows.forEach((r, i) => r.forEach(x => diamond(ds, x, 382 + i * 18 - (i > 3 ? 0.5 : 0))));
all.forEach(x => add(ds, 'path', { d: `M${x - 4.500} 489.500h9`, stroke: '#fff' }));
add(ds, 'path', { d: 'M1038 381h-10q-4 0-4 4v6q0 4 4 4h10z', fill: '#2c2c2c' });
add(ds, 'path', { d: 'm1030 383.500-4 4 4 4', fill: 'none', stroke: '#bbb' });

// Timeline
const tl = document.getElementById('timeKeys');
add(tl, 'rect', { x: 0, y: 518, width: 1034, height: 78, fill: '#444' });
add(tl, 'rect', { x: 0, y: 518, width: 34, height: 78, fill: '#393939' });
add(tl, 'rect', { x: 993, y: 518, width: 41, height: 78, fill: '#393939' });
for (let f = 0; f <= 255; f += 5) {
  const x = Math.round(34.4 + 3.837 * f) + 0.5;
  add(tl, 'path', { d: `M${x} 518V595`, stroke: '#1b1b1b', opacity: f % 10 ? 0.25 : 0.75 });
}
add(tl, 'path', { d: 'M38.500 518V595M993.500 518V595M0 518.500H1034', stroke: '#111' });
add(tl, 'rect', { x: 9, y: 581, width: 1014, height: 11.500, rx: 5.500, fill: '#666' });
add(tl, 'circle', { cx: 13, cy: 587, r: 4, fill: '#484848' });
add(tl, 'circle', { cx: 1018, cy: 587, r: 4, fill: '#555', stroke: '#333' });
for (let f = 0; f <= 250; f += 10) add(tl, 'text', { x: 40.5 + 3.77 * f, y: 591 }, f);
const tx = [38.5, 76, 84, 92.5, 107.5, 130.5, 187.5, 203.5, 218, 225, 230.5, 239, 242, 245, 249, 257.5, 306, 313, 318, 333.5, 349.5, 364.5, 391.5, 494.5, 571.5, 656.5];
for (const y of [533.5, 551.5, 569.5]) tx.forEach(x => diamond(tl, x, y));
add(tl, 'path', { d: 'M575 518V585', stroke: '#5a85c9', 'stroke-width': 2 });
add(tl, 'rect', { x: 560, y: 580, width: 31, height: 14, rx: 2, fill: '#4f79ba' });
add(tl, 'text', { x: 575.5, y: 591.5, class: 'now' }, '141');
add(tl, 'rect', { x: -4, y: 533, width: 12, height: 14, rx: 4, fill: '#2c2c2c' });
add(tl, 'path', { d: 'm2 535.500 4 4-4 4', fill: 'none', stroke: '#bbb' });
add(tl, 'rect', { x: 1023, y: 533, width: 16, height: 14, rx: 4, fill: '#2c2c2c' });
add(tl, 'path', { d: 'm1030 535.500-4 4 4 4', fill: 'none', stroke: '#bbb' });
```
